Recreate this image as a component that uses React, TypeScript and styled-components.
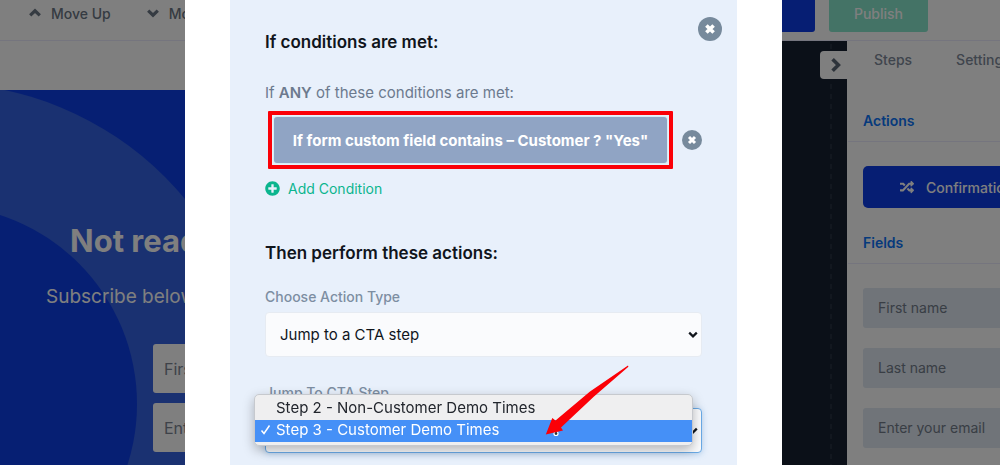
import React from "react";
import styled, { createGlobalStyle } from "styled-components";
import { FaRandom, FaPlusCircle } from "react-icons/fa";

const GlobalStyle = createGlobalStyle`
  *, *::before, *::after { box-sizing: border-box; }
  body { margin: 0; font-family: Inter, "Liberation Sans", sans-serif; }
  button, input, select { font: inherit; }
  h1, h2, h3, p, ul { margin: 0; padding: 0; }
`;

const Page = styled.div`
  position: relative;
  display: flex;
  flex-direction: column;
  height: 100vh;
  overflow: hidden;
  background: #fff;
`;

const Header = styled.header`
  display: flex;
  align-items: flex-end;
  justify-content: space-between;
  height: 41px;
  padding: 0 72px 8px 28px;
  border-bottom: 1px solid #eaeafc;
`;

const ButtonGroup = styled.div<{ $gap: number }>`
  display: flex;
  gap: ${(p) => p.$gap}px;
`;

const MoveButton = styled.button`
  display: flex;
  align-items: center;
  gap: 9px;
  height: 38px;
  padding: 0;
  border: 0;
  background: none;
  color: #6b7684;
  font-size: 14px;
  font-weight: 500;
  white-space: nowrap;
`;

const HeaderAction = styled.button<{ $color: string; $pad: number }>`
  height: 38px;
  padding: 0 ${(p) => p.$pad}px;
  border: 0;
  border-radius: 3px;
  background: ${(p) => p.$color};
  color: #fff;
  font-size: 14px;
  font-weight: 500;
`;

const Workspace = styled.div`
  display: flex;
  flex: 1;
  min-height: 0;
`;

const Preview = styled.main`
  flex: 1;
  min-width: 0;
  padding-top: 49px;
`;

const Banner = styled.section`
  position: relative;
  height: 100%;
  overflow: hidden;
  background: #0c3ee6;
  color: #fff;
`;

const Rings = styled.svg`
  position: absolute;
  top: 0;
  left: 0;
`;

const BannerContent = styled.div`
  position: relative;
  display: flex;
  flex-direction: column;
  padding: 131px 0 0 46px;
`;

const BannerTitle = styled.h1`
  padding-left: 24px;
  font-size: 31px;
  line-height: 40px;
  font-weight: 700;
`;

const BannerText = styled.p`
  margin-top: 22px;
  font-size: 19px;
  line-height: 28px;
`;

const BannerForm = styled.form`
  display: flex;
  flex-direction: column;
  gap: 10px;
  width: 320px;
  margin-top: 33px;
  padding-left: 107px;
`;

const BannerInput = styled.input`
  width: 100%;
  height: 49px;
  padding: 0 11px;
  border: 0;
  border-radius: 3px;
  background: #fff;
  font-size: 16px;
  &::placeholder { color: #7c8593; opacity: 1; }
`;

const Stage = styled.div`
  position: relative;
  flex: 0 0 200px;
  background: #172130;
`;

const Guide = styled.svg`
  position: absolute;
  top: 0;
  right: 15px;
  height: 100%;
`;

const CollapseButton = styled.button`
  position: absolute;
  top: 10px;
  right: 0;
  display: flex;
  align-items: center;
  justify-content: center;
  width: 27px;
  height: 28px;
  padding: 0 0 0 5px;
  border: 0;
  border-radius: 4px 0 0 4px;
  background: #fff;
  color: #5b6675;
`;

const Sidebar = styled.aside`
  flex: 0 0 153px;
  overflow: hidden;
`;

const SidebarInner = styled.div`
  width: 300px;
`;

const Tabs = styled.nav`
  display: flex;
  gap: 44px;
  padding: 9px 0 0 27px;
`;

const Tab = styled.a`
  color: #7e8a9a;
  font-size: 14px;
  line-height: 20px;
  font-weight: 500;
  text-decoration: none;
`;

const SidebarTitle = styled.h3<{ $top: number }>`
  margin: ${(p) => p.$top}px 0 0 1px;
  padding: 0 0 10px 15px;
  border-bottom: 1px solid #eaeafc;
  color: #0c74f8;
  font-size: 14px;
  line-height: 20px;
  font-weight: 600;
`;

const SidebarList = styled.div`
  display: flex;
  flex-direction: column;
  gap: 20px;
  padding: 24px 16px 0;
`;

const ActionButton = styled.button`
  display: flex;
  align-items: center;
  gap: 12px;
  height: 42px;
  padding: 0 37px;
  border: 0;
  border-radius: 5px;
  background: #0c3ce6;
  color: #fff;
  font-size: 14px;
  font-weight: 500;
`;

const FieldInput = styled.input`
  height: 40px;
  padding: 0 15px 2px;
  border: 0;
  border-radius: 3px;
  background: #e0e8f2;
  font-size: 14px;
  &::placeholder { color: #727c8a; opacity: 1; }
`;

const Backdrop = styled.div`
  position: fixed;
  inset: 0;
  display: flex;
  padding: 0 218px 0 185px;
  background: rgba(0, 0, 0, 0.5);
`;

const Modal = styled.div`
  flex: 1;
  min-width: 0;
  padding: 0 45px;
  background: #fff;
`;

const Panel = styled.div`
  position: relative;
  height: 100%;
  padding: 29px 35px 0;
  background: #e8f0fb;
`;

const RoundButton = styled.button`
  display: flex;
  flex: none;
  padding: 0;
  border: 0;
  background: none;
`;

const CloseCorner = styled.div`
  position: absolute;
  top: 17px;
  right: 15px;
`;

const Heading = styled.h2<{ $top?: number }>`
  margin-top: ${(p) => p.$top ?? 0}px;
  color: #10151c;
  font-size: 17px;
  line-height: 26px;
  font-weight: 600;
`;

const Intro = styled.p`
  margin-top: 26px;
  color: #6c7a8e;
  font-size: 15px;
  line-height: 24px;
  b { font-weight: 600; }
`;

const ConditionRow = styled.div`
  display: flex;
  align-items: center;
  gap: 9px;
  margin-top: 6px;
  padding-left: 3px;
`;

const Highlight = styled.div`
  flex: 1;
  min-width: 0;
  padding: 2px;
  border: 4px solid #fb0007;
  border-radius: 1px;
`;

const ConditionButton = styled.button`
  width: 100%;
  height: 46px;
  padding: 0;
  border: 0;
  border-radius: 3px;
  background: #90a4c4;
  box-shadow: 0 0 0 1px #d5eef5;
  color: #fff;
  font-size: 15px;
  font-weight: 700;
  white-space: nowrap;
`;

const AddButton = styled.button`
  display: flex;
  align-items: center;
  gap: 8px;
  height: 20px;
  margin-top: 9px;
  padding: 0;
  border: 0;
  background: none;
  color: #0bb58e;
  font-size: 14px;
  svg { font-size: 15px; }
`;

const Label = styled.label<{ $top: number }>`
  display: block;
  margin-top: ${(p) => p.$top}px;
  color: #7d8ea2;
  font-size: 14px;
  line-height: 20px;
  font-weight: 500;
`;

const SelectWrap = styled.div`
  position: relative;
  margin-top: 5px;
`;

const Select = styled.select<{ $focused?: boolean }>`
  display: block;
  width: 100%;
  height: 45px;
  padding: 0 30px 0 14px;
  appearance: none;
  border: 1px solid ${(p) => (p.$focused ? "#6aaae6" : "#e6ebf2")};
  border-radius: 4px;
  background: #fafbfd;
  box-shadow: ${(p) => (p.$focused ? "0 1px 6px rgba(90, 150, 210, 0.4)" : "none")};
  color: #10151c;
  font-size: 15px;
`;

const Caret = styled.svg`
  position: absolute;
  top: 19px;
  right: 4px;
  pointer-events: none;
`;

const Menu = styled.ul`
  position: absolute;
  top: -14px;
  left: -11px;
  right: 9px;
  padding: 3px 0;
  border: 1px solid #c6c9ce;
  border-radius: 5px;
  background: #efeff0;
  box-shadow: 0 4px 12px rgba(0, 0, 0, 0.28);
  list-style: none;
`;

const Option = styled.li<{ $active?: boolean }>`
  display: flex;
  align-items: center;
  height: 22px;
  padding-bottom: 3px;
  background: ${(p) => (p.$active ? "#4590f7" : "transparent")};
  color: ${(p) => (p.$active ? "#fff" : "#22262d")};
  font-size: 15px;
  white-space: nowrap;
`;

const CheckSlot = styled.span`
  display: flex;
  width: 21px;
  padding-left: 5px;
`;

const Pointer = styled.svg`
  position: absolute;
  top: -43px;
  left: 280px;
  pointer-events: none;
`;

function SelectCaret() {
  return (
    <Caret width="10" height="8" viewBox="0 0 10 8" aria-hidden="true">
      <path d="M1.2 1.6 5 5.4 8.8 1.6" fill="none" stroke="#10151c" strokeWidth="2.2" />
    </Caret>
  );
}

function Chevron({ angle = 0 }: { angle?: number }) {
  return (
    <svg width="14" height="14" viewBox="0 0 14 14" aria-hidden="true">
      <path
        d="M2.2 9.4 7 4.8 11.8 9.4"
        fill="none"
        stroke="currentColor"
        strokeWidth="3.2"
        transform={`rotate(${angle} 7 7)`}
      />
    </svg>
  );
}

function CrossIcon({ size }: { size: number }) {
  return (
    <svg width={size} height={size} viewBox="0 0 24 24" aria-hidden="true">
      <circle cx="12" cy="12" r="12" fill="#778a9c" />
      <path d="M8.4 8.4 15.6 15.6M15.6 8.4 8.4 15.6" stroke="#fff" strokeWidth="3.6" />
    </svg>
  );
}

export default function App() {
  return (
    <Page>
      <GlobalStyle />
      <Header>
        <ButtonGroup $gap={35}>
          <MoveButton><Chevron />Move Up</MoveButton>
          <MoveButton><Chevron angle={180} />Move Down</MoveButton>
        </ButtonGroup>
        <ButtonGroup $gap={14}>
          <HeaderAction $color="#0c3ce6" $pad={42}>Save</HeaderAction>
          <HeaderAction $color="#88e6cc" $pad={25}>Publish</HeaderAction>
        </ButtonGroup>
      </Header>
      <Workspace>
        <Preview>
          <Banner>
            <Rings width="260" height="640" viewBox="0 0 260 640" aria-hidden="true">
              <circle cx="-62" cy="314" r="321" fill="#3462e2" />
              <circle cx="-62" cy="314" r="199" fill="#0c3ee6" />
            </Rings>
            <BannerContent>
              <BannerTitle>Not ready</BannerTitle>
              <BannerText>Subscribe below</BannerText>
              <BannerForm>
                <BannerInput placeholder="First name" aria-label="First name" />
                <BannerInput placeholder="Enter your email" aria-label="Email" />
              </BannerForm>
            </BannerContent>
          </Banner>
        </Preview>
        <Stage>
          <Guide width="2" aria-hidden="true">
            <line x1="1" y1="3" x2="1" y2="100%" stroke="#343d4c" strokeWidth="1" strokeDasharray="5 5" />
          </Guide>
          <CollapseButton aria-label="Collapse sidebar">
            <svg width="12" height="16" viewBox="0 0 12 16" aria-hidden="true">
              <path d="M2.6 2.2 8.4 8 2.6 13.8" fill="none" stroke="currentColor" strokeWidth="3.6" />
            </svg>
          </CollapseButton>
        </Stage>
        <Sidebar>
          <SidebarInner>
            <Tabs>
              <Tab href="#steps">Steps</Tab>
              <Tab href="#settings">Settings</Tab>
            </Tabs>
            <SidebarTitle $top={41}>Actions</SidebarTitle>
            <SidebarList>
              <ActionButton><FaRandom />Confirmation</ActionButton>
            </SidebarList>
            <SidebarTitle $top={25}>Fields</SidebarTitle>
            <SidebarList>
              <FieldInput placeholder="First name" aria-label="First name field" />
              <FieldInput placeholder="Last name" aria-label="Last name field" />
              <FieldInput placeholder="Enter your email" aria-label="Email field" />
            </SidebarList>
          </SidebarInner>
        </Sidebar>
      </Workspace>
      <Backdrop>
        <Modal role="dialog" aria-label="Conditional logic">
          <Panel>
            <CloseCorner>
              <RoundButton aria-label="Close"><CrossIcon size={24} /></RoundButton>
            </CloseCorner>
            <Heading>If conditions are met:</Heading>
            <Intro>If <b>ANY</b> of these conditions are met:</Intro>
            <ConditionRow>
              <Highlight>
                <ConditionButton>If form custom field contains – Customer ? "Yes"</ConditionButton>
              </Highlight>
              <RoundButton aria-label="Remove condition"><CrossIcon size={20} /></RoundButton>
            </ConditionRow>
            <AddButton><FaPlusCircle />Add Condition</AddButton>
            <Heading $top={42}>Then perform these actions:</Heading>
            <Label htmlFor="action-type" $top={21}>Choose Action Type</Label>
            <SelectWrap>
              <Select id="action-type"><option>Jump to a CTA step</option></Select>
              <SelectCaret />
            </SelectWrap>
            <Label htmlFor="cta-step" $top={26}>Jump To CTA Step</Label>
            <SelectWrap>
              <Select id="cta-step" $focused><option>Step 3 - Customer Demo Times</option></Select>
              <SelectCaret />
              <Menu role="listbox" aria-label="CTA steps">
                <Option role="option" aria-selected="false"><CheckSlot />Step 2 - Non-Customer Demo Times</Option>
                <Option role="option" aria-selected="true" $active>
                  <CheckSlot>
                    <svg width="11" height="11" viewBox="0 0 11 11" aria-hidden="true">
                      <path d="M1.5 6.5 4 9.5 9.5 1.5" fill="none" stroke="#fff" strokeWidth="1.5" />
                    </svg>
                  </CheckSlot>
                  Step 3 - Customer Demo Times
                </Option>
              </Menu>
              <Pointer width="84" height="74" viewBox="545 365 84 74" aria-hidden="true">
                <circle cx="556" cy="433.5" r="2" fill="#333" stroke="#fff" strokeWidth="1.2" />
                <path d="M628 365.4 590 391.5 555.5 420.5 552.3 418 545.8 434.5 563 430.5 561 427.5 594 396.5 628.4 366.8Z" fill="#fb0007" />
              </Pointer>
            </SelectWrap>
          </Panel>
        </Modal>
      </Backdrop>
    </Page>
  );
}
